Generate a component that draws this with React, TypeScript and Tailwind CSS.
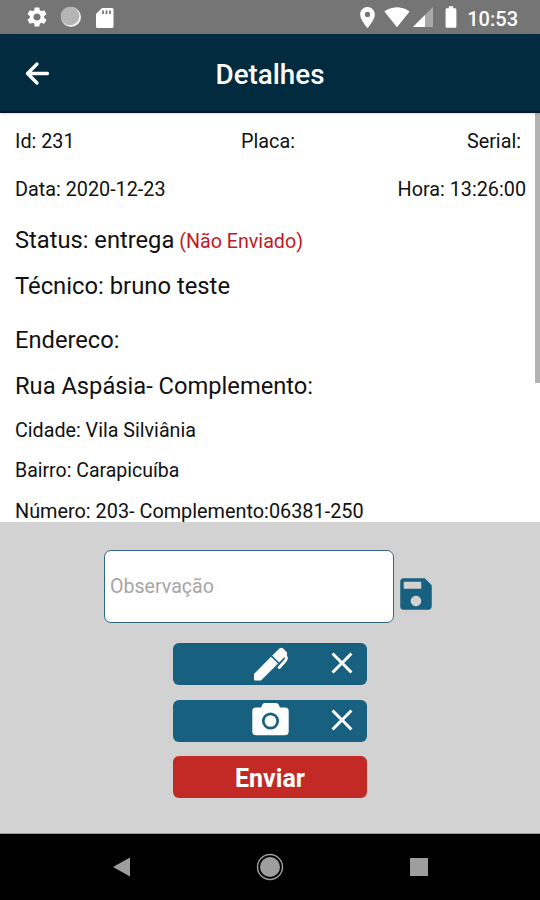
import type { ReactNode } from 'react';
import {
  MdBatteryFull,
  MdClose,
  MdLocationOn,
  MdSave,
  MdSettings,
  MdSignalWifi4Bar,
} from 'react-icons/md';

function StatusBar() {
  return (
    <div className="flex h-[34px] items-center justify-between bg-[#757575] pl-[25px] pr-[22px] text-white">
      <div className="flex items-center">
        <MdSettings size={24} />
        <svg className="ml-[11px]" width="22" height="22" viewBox="0 0 22 22">
          <circle cx="11" cy="11" r="10" fill="#f2f2f2" />
          <circle cx="10" cy="10" r="9.3" fill="#b5b5b5" />
        </svg>
        <svg className="ml-[13px] mt-px" width="19" height="22" viewBox="0 0 19 22">
          <path d="M7 1h10q1.500 0 1.500 1.500v17q0 1.500-1.500 1.500H2.500Q1 21 1 19.500V7z" fill="#fff" />
          <path d="M8 3.500v3.500M11.500 3.500v3.500M15 3.500v3.500" stroke="#757575" strokeWidth="1.800" />
        </svg>
      </div>
      <div className="flex items-center">
        <MdLocationOn size={25} />
        <MdSignalWifi4Bar className="ml-1" size={26} />
        <svg className="ml-[3px]" width="20" height="20" viewBox="0 0 20 20">
          <path d="M20 0v20H0z" fill="#a9a9a9" />
          <path d="M12 8v12H0z" fill="#fff" />
        </svg>
        <MdBatteryFull className="ml-[5px]" size={26} />
        <span className="ml-[3px] mt-1 text-[20px] leading-6 font-medium">10:53</span>
      </div>
    </div>
  );
}

function Header() {
  return (
    <header className="relative z-10 grid h-[79px] grid-cols-[1fr_auto_1fr] items-center border-b-2 border-[#02172b] bg-[#022b40] px-[25px] text-white shadow-sm">
      <svg className="mt-0.5" width="25" height="25" viewBox="0 0 25 25" fill="none" stroke="currentColor" strokeWidth="3.300" strokeLinecap="round" strokeLinejoin="round">
        <path d="M22.500 12.500H3M12 3l-9.500 9.500L12 22" />
      </svg>
      <h1 className="mt-1 text-[27.8px] leading-8 font-medium">Detalhes</h1>
    </header>
  );
}

function Details() {
  return (
    <main className="relative h-[409px] overflow-hidden bg-white pt-px pl-[15px] pr-[14px] text-[19.8px] text-[#111]">
      <div className="grid h-14 grid-cols-[1fr_auto_1fr] items-center">
        <span>Id: 231</span>
        <span className="-ml-[5px]">Placa:</span>
        <span className="pr-[5px] text-right">Serial:</span>
      </div>
      <div className="flex h-10 items-center justify-between">
        <span>Data: 2020-12-23</span>
        <span>Hora: 13:26:00</span>
      </div>
      <p className="-mt-px h-[62px] text-[23.7px] leading-[62px]">
        Status: entrega <span className="-ml-px text-[19.7px] text-[#c21a1f]">(Não Enviado)</span>
      </p>
      <p className="h-[31px] text-[23.8px] leading-[31px]">Técnico: bruno teste</p>
      <p className="h-[76px] text-[23.7px] leading-[77px]">Endereco:</p>
      <p className="h-4 text-[23.7px] leading-4">Rua Aspásia- Complemento:</p>
      <p className="mt-[16px] h-[41px] text-[19.7px] leading-[42px]">Cidade: Vila Silviânia</p>
      <p className="-mt-px h-[41px] text-[19.5px] leading-[41px]">Bairro: Carapicuíba</p>
      <p className="h-[41px] text-[19.85px] leading-[41px]">Número: 203- Complemento:06381-250</p>
      <div className="absolute top-0 right-0 h-[270px] w-[5px] bg-[#b3b3b3]" />
    </main>
  );
}

function PenIcon() {
  return (
    <svg width="37" height="36" viewBox="0 0 37 36" fill="currentColor">
      <path d="M2 28 19 10.700l7 6.800L9 34.500H3q-1 0-1-1z" />
      <path d="M20.200 9.600 27.500 2.500q1.800-1.600 3.600.1l3.500 3.500q1.200 1.300.1 2.600L27.200 16.500z" />
      <path d="m33 8.500 1.300 3.200q.4 1.500-.8 2.800l-6.300 7" fill="none" stroke="currentColor" strokeWidth="3" strokeLinecap="round" strokeLinejoin="round" />
    </svg>
  );
}

function CameraIcon() {
  return (
    <svg className="-mt-[3px]" width="37" height="34" viewBox="0 0 37 34">
      <path d="M4 5.500h5l1.300-2.800Q11 1 12.800 1h11.400q1.800 0 2.500 1.700L28 5.500h5q3.700 0 3.700 3.700v20.300q0 3.700-3.700 3.700H4q-3.700 0-3.700-3.700V9.200Q.3 5.500 4 5.500z" fill="currentColor" />
      <circle cx="18.500" cy="19" r="7.200" fill="none" stroke="#186080" strokeWidth="2.700" />
    </svg>
  );
}

function MediaButton({ children }: { children: ReactNode }) {
  return (
    <button className="grid h-[42px] w-[194px] grid-cols-[1fr_auto_1fr] items-center rounded-[6px] bg-[#186080] text-white">
      <span />
      {children}
      <MdClose className="-mt-0.5 mr-[7px] justify-self-end" size={36} />
    </button>
  );
}

function Actions() {
  return (
    <section className="flex h-[312px] flex-col items-center border-b border-[#999] bg-[#d2d2d2] pt-[28px]">
      <div className="flex w-full pl-[104px]">
        <input
          className="h-[73px] w-[290px] rounded-[7px] border border-[#2f6784] bg-white px-[5px] text-[19.6px] placeholder:text-[#a6a6a6]"
          placeholder="Observação"
        />
        <MdSave className="mt-[22.5px] ml-px text-[#186080]" size={42} />
      </div>
      <div className="mt-5 flex flex-col gap-[14.5px]">
        <MediaButton>
          <PenIcon />
        </MediaButton>
        <MediaButton>
          <CameraIcon />
        </MediaButton>
        <button className="h-[42px] w-[194px] rounded-[6px] bg-[#c32925] pt-1 text-[25px] leading-[38px] font-bold text-white">
          Enviar
        </button>
      </div>
    </section>
  );
}

function NavBar() {
  return (
    <nav className="flex h-[66px] items-center justify-between bg-black pl-[113px] pr-[112px] text-[#9e9e9e]">
      <svg width="17" height="20" viewBox="0 0 17 20" fill="currentColor">
        <path d="M0 10 17 .5v19z" />
      </svg>
      <svg width="28" height="28" viewBox="0 0 28 28" fill="currentColor">
        <circle cx="14" cy="14" r="12.500" fill="none" stroke="currentColor" strokeWidth="1.400" />
        <circle cx="14" cy="14" r="10" />
      </svg>
      <div className="h-[18px] w-[18px] bg-[#9e9e9e]" />
    </nav>
  );
}

export default function App() {
  return (
    <div className="h-[900px] w-[540px] overflow-hidden font-['Roboto',sans-serif]">
      <StatusBar />
      <Header />
      <Details />
      <Actions />
      <NavBar />
    </div>
  );
}
